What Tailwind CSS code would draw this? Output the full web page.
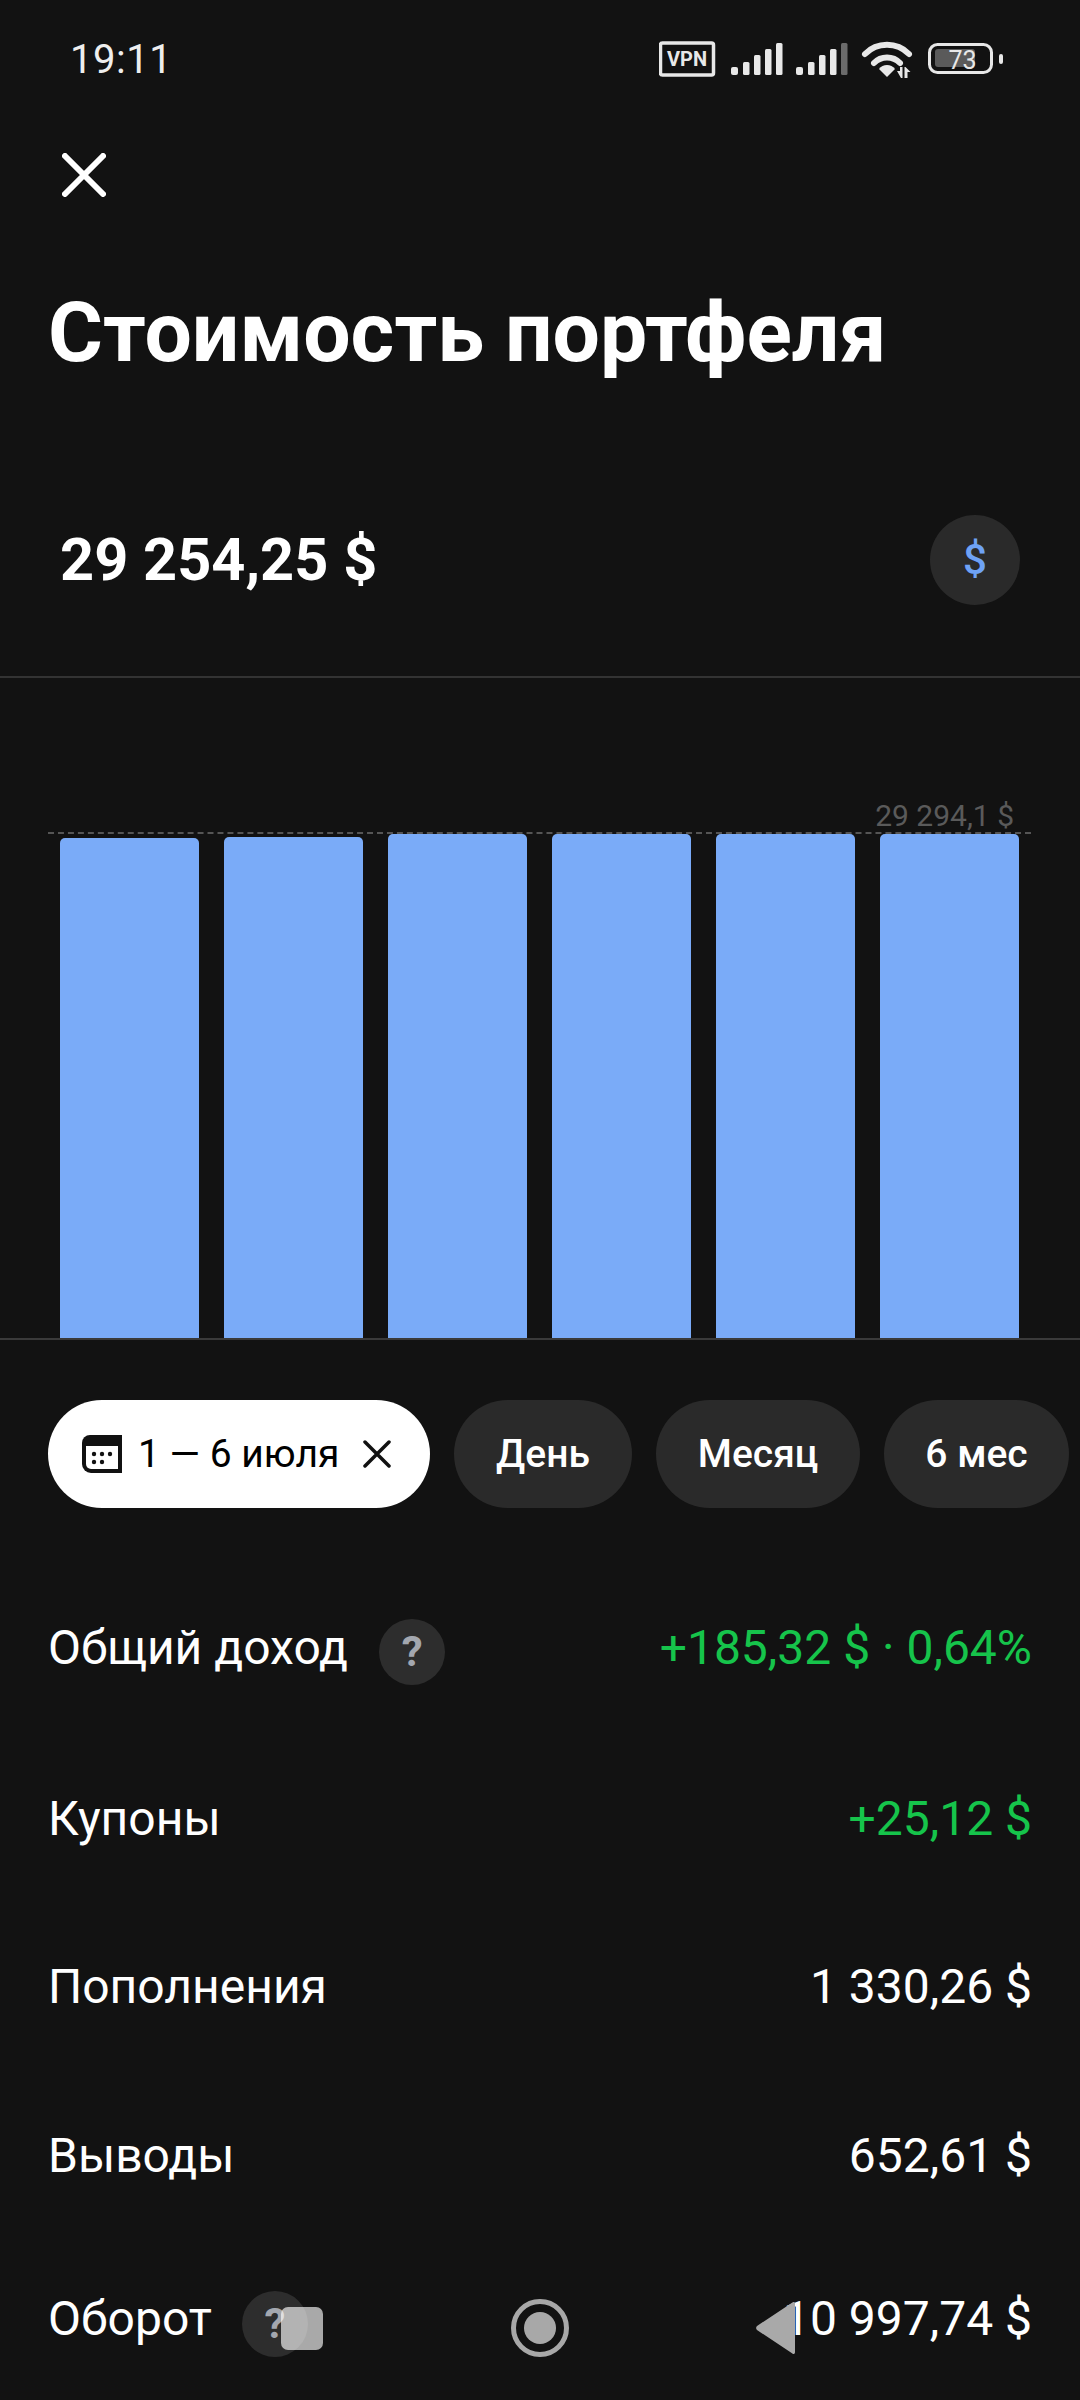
<!DOCTYPE html>
<html lang="ru">
<head>
<meta charset="utf-8" />
<title>Стоимость портфеля</title>
<script src="https://cdn.jsdelivr.net/npm/@tailwindcss/browser@4"></script>
</head>
<body class="bg-[#121212]">
<div class="relative w-[1080px] h-[2400px] overflow-hidden bg-[#121212] text-white font-['Roboto',sans-serif]">

  <!-- status bar -->
  <div class="h-[120px] flex items-center justify-between pl-[70px] pr-[75px]">
    <span class="text-[40px] leading-none text-[#eeeeee] tracking-[0.5px]">19:11</span>
    <div class="flex items-center">
      <svg class="w-[346px] h-[40px]" viewBox="0 0 346 40" fill="#e8e8e8">
        <rect x="1.5" y="3" width="53" height="32" rx="2" fill="none" stroke="#e8e8e8" stroke-width="3.5"/>
        <text x="28" y="26" text-anchor="middle" font-family="Roboto" font-weight="700" font-size="20">VPN</text>
        <rect x="72" y="27" width="7" height="8" rx="2"/><rect x="84" y="22" width="6.500" height="13" rx="1.500"/><rect x="95" y="15" width="6.500" height="20" rx="1.500"/><rect x="106" y="9" width="6.500" height="26" rx="1.500"/><rect x="117" y="3" width="6.500" height="32" rx="1.500"/>
        <rect x="137" y="27" width="7" height="8" rx="2"/><rect x="149" y="22" width="6.500" height="13" rx="1.500"/><rect x="160" y="15" width="6.500" height="20" rx="1.500"/><rect x="171" y="9" width="6.500" height="26" rx="1.500"/><rect x="182" y="3" width="6.500" height="32" rx="1.500" fill="#6b6b6b"/>
        <path d="M206 14a31 31 0 0 1 44 0M215 23a18 18 0 0 1 26 0" fill="none" stroke="#e8e8e8" stroke-width="6" stroke-linecap="round"/>
        <path d="M220 29a10 10 0 0 1 16 0l-8 8z"/>
        <path d="M238 31h3v-4h2.500v11h-1.500zM245.500 27h1l5 5h-3v6h-3z"/>
        <rect x="270.500" y="4.500" width="62" height="28" rx="8" fill="none" stroke="#e8e8e8" stroke-width="3"/>
        <rect x="276" y="9" width="40" height="18" rx="3" fill="#5a5a5a"/>
        <text x="303.500" y="29" text-anchor="middle" font-family="Roboto" font-size="25">73</text>
        <rect x="340" y="14" width="4" height="10" rx="2"/>
      </svg>
    </div>
  </div>

  <!-- close -->
  <div class="h-[110px] flex items-center pl-[62px]">
    <svg class="w-[44px] h-[44px]" viewBox="0 0 44 44" fill="none" stroke="#ffffff" stroke-width="6" stroke-linecap="round"><path d="M3 3l38 38M41 3L3 41"/></svg>
  </div>

  <!-- title -->
  <div class="h-[206px] flex items-center pl-[48px]">
    <h1 class="text-[84px] font-bold leading-none">Стоимость портфеля</h1>
  </div>

  <!-- total -->
  <div class="h-[242px] flex items-start justify-between pl-[60px] pr-[60px] pt-[79px] border-b-2 border-[#333333]">
    <span class="text-[59.5px] font-bold leading-[90px]">29 254,25 $</span>
    <div class="w-[90px] h-[90px] rounded-full bg-[#2a2a2a] flex items-center justify-center">
      <span class="text-[42px] font-medium leading-none text-[#6ea2f5]">$</span>
    </div>
  </div>

  <!-- chart -->
  <div class="relative h-[662px] flex items-end gap-[25px] px-[60px] border-b-2 border-[#3a3a3a]">
    <div class="w-[139px] h-[500px] rounded-t-[5px] bg-[#7aabf8]"></div>
    <div class="w-[139px] h-[501px] rounded-t-[5px] bg-[#7aabf8]"></div>
    <div class="w-[139px] h-[504px] rounded-t-[5px] bg-[#7aabf8]"></div>
    <div class="w-[139px] h-[504px] rounded-t-[5px] bg-[#7aabf8]"></div>
    <div class="w-[139px] h-[504px] rounded-t-[5px] bg-[#7aabf8]"></div>
    <div class="w-[139px] h-[504px] rounded-t-[5px] bg-[#7aabf8]"></div>
    <div class="absolute left-[48px] right-[49px] top-[154px] border-t-2 border-dashed border-[#555555]"></div>
    <span class="absolute right-[66px] top-[123px] text-[30px] leading-[30px] text-[#5a5a5a]">29 294,1 $</span>
  </div>

  <!-- period chips -->
  <div class="flex gap-[24px] pl-[48px] pt-[60px] whitespace-nowrap">
    <div class="w-[382px] h-[108px] shrink-0 rounded-full bg-white text-black flex items-center pl-[34px]">
      <svg class="w-[40px] h-[38px] shrink-0" viewBox="0 0 40 38">
        <path d="M8 0h32v38H9a9 9 0 0 1-9-9V8a8 8 0 0 1 8-8z" fill="#111111"/>
        <path d="M4 11h32v23H9a5 5 0 0 1-5-5z" fill="#ffffff"/>
        <circle cx="12" cy="19" r="2.200" fill="#111111"/><circle cx="20" cy="19" r="2.200" fill="#111111"/><circle cx="28" cy="19" r="2.200" fill="#111111"/>
        <circle cx="12" cy="27" r="2.200" fill="#111111"/><circle cx="20" cy="27" r="2.200" fill="#111111"/>
      </svg>
      <span class="ml-[16px] text-[39px] leading-none">1 — 6 июля</span>
      <svg class="ml-[24px] w-[28px] h-[28px] shrink-0" viewBox="0 0 28 28" fill="none" stroke="#111111" stroke-width="3.500" stroke-linecap="round"><path d="M2 2l24 24M26 2L2 26"/></svg>
    </div>
    <div class="w-[178px] h-[108px] shrink-0 rounded-full bg-[#2a2a2a] flex items-center justify-center text-[39px] font-medium">День</div>
    <div class="w-[204px] h-[108px] shrink-0 rounded-full bg-[#2a2a2a] flex items-center justify-center text-[39px] font-medium">Месяц</div>
    <div class="w-[185px] h-[108px] shrink-0 rounded-full bg-[#2a2a2a] flex items-center justify-center text-[39px] font-medium">6 мес</div>
  </div>

  <!-- details -->
  <div class="pl-[48px] pr-[48px] pt-[83px] text-[48px] leading-none">
    <div class="h-[171px] flex items-start justify-between pt-[30px]">
      <div class="flex items-start">
        <span class="leading-[54px]">Общий доход</span>
        <div class="ml-[31px] -mt-[2px] w-[66px] h-[66px] rounded-full bg-[#2d2d2d] flex items-center justify-center text-[42px] font-bold text-[#a3a7af]">?</div>
      </div>
      <span class="leading-[54px] text-[#16c44b]">+185,32 $ · 0,64%</span>
    </div>
    <div class="h-[168px] flex items-start justify-between pt-[30px]">
      <span class="leading-[54px]">Купоны</span>
      <span class="leading-[54px] text-[#16c44b]">+25,12 $</span>
    </div>
    <div class="h-[169px] flex items-start justify-between pt-[30px]">
      <span class="leading-[54px]">Пополнения</span>
      <span class="leading-[54px]">1 330,26 $</span>
    </div>
    <div class="h-[163px] flex items-start justify-between pt-[30px]">
      <span class="leading-[54px]">Выводы</span>
      <span class="leading-[54px]">652,61 $</span>
    </div>
    <div class="flex items-start justify-between pt-[30px]">
      <div class="flex items-start">
        <span class="leading-[54px]">Оборот</span>
        <div class="ml-[30px] -mt-[1px] w-[66px] h-[66px] rounded-full bg-[#2d2d2d] flex items-center justify-center text-[42px] font-bold text-[#a3a7af]">?</div>
      </div>
      <span class="leading-[54px]">10 997,74 $</span>
    </div>
  </div>

  <!-- system nav overlay -->
  <div class="absolute left-0 bottom-0 w-full h-[110px]">
    <div class="absolute left-[281px] top-[17px] w-[42px] h-[43px] rounded-[7px] bg-white/64"></div>
    <svg class="absolute left-[511px] top-[9px] w-[58px] h-[58px]" viewBox="0 0 58 58"><circle cx="29" cy="29" r="26.500" fill="none" stroke="#a8a8a8" stroke-width="5"/><circle cx="29" cy="29" r="16" fill="#a8a8a8"/></svg>
    <svg class="absolute left-[755px] top-[11px] w-[42px] h-[54px]" viewBox="0 0 42 54"><path d="M40 2.500v49a1.500 1.500 0 0 1-2.600 1L2 29a3 3 0 0 1 0-4L37.400 1.500A1.500 1.500 0 0 1 40 2.500z" fill="#a9a9a9"/></svg>
  </div>
</div>
</body>
</html>
